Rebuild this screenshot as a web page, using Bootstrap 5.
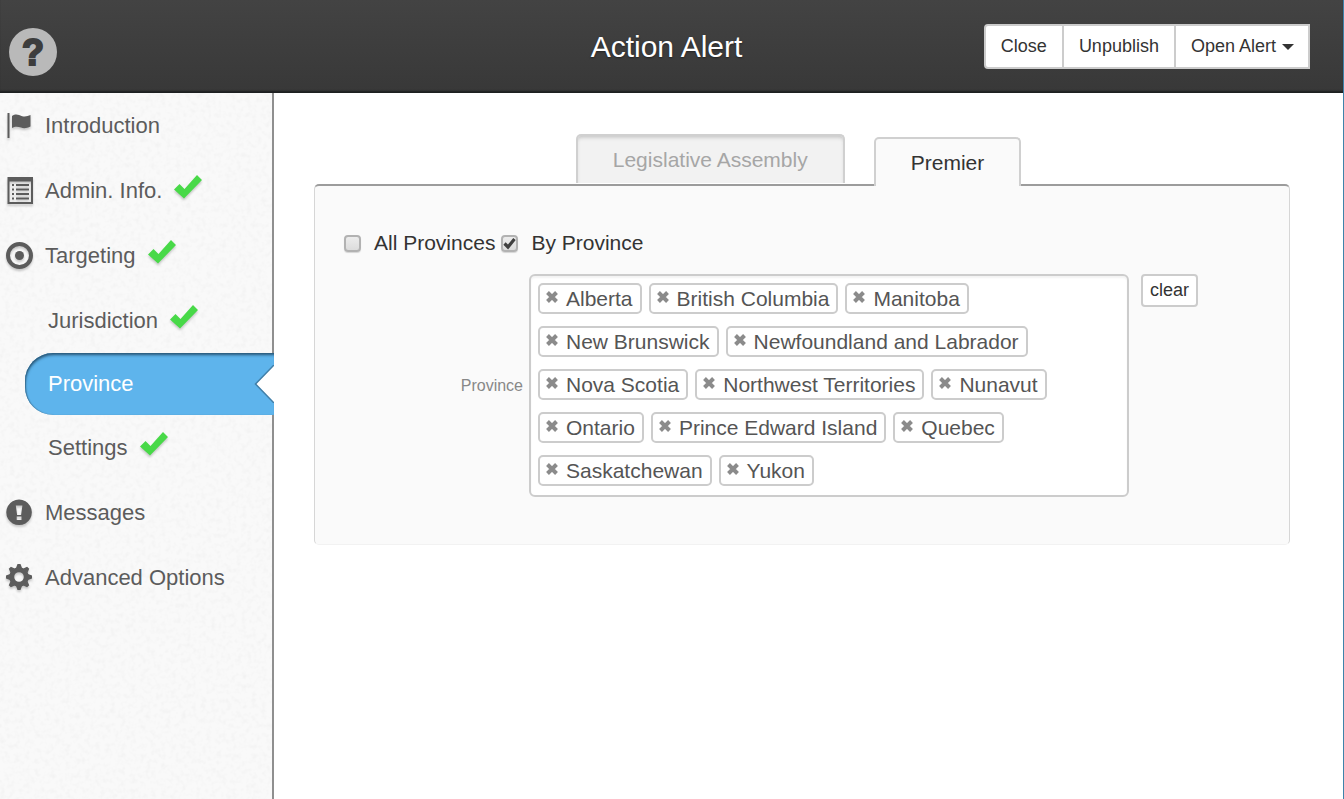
<!DOCTYPE html>
<html lang="en">
<head>
<meta charset="utf-8">
<meta name="viewport" content="width=device-width, initial-scale=1">
<title>Action Alert</title>
<link href="https://cdn.jsdelivr.net/npm/bootstrap@5.3.0/dist/css/bootstrap.min.css" rel="stylesheet">
<style>
  body { font-family: "Liberation Sans", Arial, sans-serif; color: #333; border-right: 1px solid #3f83aa; }

  /* Top bar */
  .topbar { height: 93px; padding: 0 19px 0 9px; background: linear-gradient(#434343, #383838); box-shadow: inset 0 -3px 2px -1px #1c1f20; }
  .topbar-title { font-size: 30px; line-height: 36px; color: #fff; text-shadow: 0 1px 2px #222; }
  .help-link { width: 48px; height: 48px; margin-top: 11px; background: #b9b9b9; color: #3d3d3d; font-size: 36px; font-weight: 700; line-height: 49px; -webkit-text-stroke: 2px #3d3d3d; }
  .topbar-actions { margin-right: 14px; }
  .topbar-actions .btn { border: 2px solid #ccc; border-radius: 0; background: #fff; color: #333; font-size: 18px; line-height: 25px; padding: 8px 15px; }
  .topbar-actions .btn:first-child { border-radius: 4px 0 0 4px; }
  .topbar-actions .btn + .btn { margin-left: -2px; }
  .topbar-actions .dropdown-toggle { padding-right: 14px; }
  .topbar-actions .dropdown-toggle::after { border-width: 6px 6px 0; margin-left: 6px; vertical-align: 2px; }

  /* Side navigation */
  .sidebar { width: 274px; border-right: 2px solid #8f8f8f; background: #f9f9f9; }
  .paper { z-index: 0; }
  .sidebar .nav { z-index: 1; }
  .sidebar .nav-link { height: 65px; padding: 0 0 0 6px; color: #5c5c5c; font-size: 22px; line-height: 28px; }
  .sidebar .nav-icon { width: 27px; height: 27px; margin-right: 12px; fill: #5c5c5c; filter: drop-shadow(0 2px 1px rgba(0,0,0,.2)); }
  .sidebar .done-icon { width: 28px; height: 24px; margin: 0 0 8px 12px; fill: #48d948; filter: drop-shadow(0 2px 1px rgba(0,0,0,.2)); }
  .sidebar .sub-link { padding-left: 48px; }
  .sidebar .sub-link.active { height: 62px; margin: 0 -2px 0 25px; padding-left: 23px; border-radius: 28px 0 0 28px; background: #5eb4ec; color: #fff; box-shadow: inset 1px 3px 3px -1px #285676, inset 1px 0 1px #4683ab; }
  .sidebar .notch { width: 20px; height: 38px; }

  /* Target panel */
  .workspace { padding: 41px 53px 40px 40px; }
  .target-tabs { gap: 29px; padding-right: 7px; }
  .target-tabs .nav-link { padding: 8px 35px; border: 2px solid #d0d0d0; border-bottom: 0; border-radius: 5px 5px 0 0; font-size: 21px; line-height: 31px; }
  .target-tabs .nav-link.idle { margin: 0 0 1px; background: #f2f2f2; color: #a6a6a6; box-shadow: inset 0 3px 4px -2px #bbb; }
  .target-tabs .nav-link.active { margin: 0 0 -2px; background: #fafafa; color: #333; }
  .target-panel { padding: 42px 29px 47px; border: 1px solid #d6d6d6; border-top: 2px solid #9c9c9c; border-bottom-color: #f2f2f2; border-radius: 5px; background: #fafafa; }
  .choice { gap: 13px; font-size: 21px; line-height: 30px; }
  .choice-row { gap: 6px; margin-bottom: 16px; }
  .tick { appearance: none; width: 17px; height: 17px; margin: 0; border: 2px solid #b2b2b2; border-radius: 4px; background: linear-gradient(#ececec, #dcdcdc); box-shadow: 0 1px 1px rgba(0,0,0,.15); }
  .tick:checked { background: url("data:image/svg+xml,%3Csvg xmlns='http://www.w3.org/2000/svg' viewBox='0 0 13 13'%3E%3Cpath d='M1.500 6.500l3.500 3.500L11.500 2' fill='none' stroke='%23404040' stroke-width='3.200'/%3E%3C/svg%3E") center, linear-gradient(#ececec, #dcdcdc); }
  .field-label { width: 179px; margin-right: 6px; color: #888; font-size: 16px; line-height: 22px; text-align: right; }
  .tag-box { flex: 0 1 600px; min-width: 0; gap: 12px 7px; margin: 0 12px 0 0; padding: 7px 7px 9px; border: 2px solid #ccc; border-radius: 6px; background: #fff; box-shadow: inset 0 2px 2px rgba(0,0,0,.05); }
  .tag-item { height: 31px; padding: 0 7px 0 6px; border: 2px solid #ccc; border-radius: 5px; color: #555; font-size: 21px; line-height: 27px; }
  .tag-remove { width: 12px; height: 12px; margin: 0 8px 4px 0; padding: 0; border: 0; background: none; }
  .tag-remove svg { display: block; stroke: #8b8b8b; stroke-width: 4; }
  .clear-btn { padding: 2px 7px 3px; border: 2px solid #ccc; border-radius: 4px; background: #fff; color: #333; font-size: 18px; line-height: 24px; }
</style>
</head>
<body class="min-vh-100 d-flex flex-column">

<svg class="d-none" aria-hidden="true">
  <symbol id="done" viewBox="0 0 28 24"><path d="M0 14.500l5.500-5.500 5 5L23 0l5 5L10 23.500z"/></symbol>
  <symbol id="cross" viewBox="0 0 12 12"><path d="M1.500 1.500l9 9M10.500 1.500l-9 9"/></symbol>
</svg>

<header class="topbar d-flex align-items-center">
  <div class="col"><a href="#" class="help-link d-block rounded-circle text-center text-decoration-none" aria-label="Help">?</a></div>
  <h1 class="topbar-title fw-normal m-0">Action Alert</h1>
  <div class="col d-flex justify-content-end">
    <div class="topbar-actions d-flex">
      <button type="button" class="btn">Close</button>
      <button type="button" class="btn">Unpublish</button>
      <button type="button" class="btn dropdown-toggle" data-bs-toggle="dropdown" aria-expanded="false">Open Alert</button>
    </div>
  </div>
</header>

<div class="d-flex flex-grow-1">
  <aside class="sidebar flex-shrink-0 position-relative">
    <svg class="paper position-absolute top-0 start-0 w-100 h-100" aria-hidden="true">
      <filter id="grain" x="0" y="0" width="100%" height="100%">
        <feTurbulence type="fractalNoise" baseFrequency="0.2" numOctaves="2" seed="4" stitchTiles="stitch"/>
        <feColorMatrix values="0 0 0 0 0.4  0 0 0 0 0.4  0 0 0 0 0.4  0.18 0 0 0 -0.08"/>
      </filter>
      <rect width="100%" height="100%" filter="url(#grain)"/>
    </svg>
    <nav class="nav flex-column flex-nowrap position-relative">
      <a href="#" class="nav-link d-flex align-items-center">
        <svg class="nav-icon" viewBox="0 0 27 27"><path d="M1.500 1h2v25h-2zM6 4c4-3 7-1 9.500 0 3 1 6 .500 9-1v11.500c-4 2-7 2-9.500 1-3-1-6-1.500-9 .500z"/></svg>
        Introduction</a>
      <a href="#" class="nav-link d-flex align-items-center">
        <svg class="nav-icon" viewBox="0 0 27 27"><path fill-rule="evenodd" d="M1.500 0H27v27H1.500zM3.500 4.500V25H25V4.500z"/><path d="M6 7h2v2H6zM10 7h13v2H10zM6 11.500h2v2H6zM10 11.500h13v2H10zM6 16h2v2H6zM10 16h13v2H10zM6 20.500h2v2H6zM10 20.500h13v2H10z"/></svg>
        Admin. Info.<svg class="done-icon"><use href="#done"/></svg></a>
      <a href="#" class="nav-link d-flex align-items-center">
        <svg class="nav-icon" viewBox="0 0 27 27"><circle cx="13.500" cy="13.500" r="11.500" fill="none" stroke="#5c5c5c" stroke-width="4"/><circle cx="13.500" cy="13.500" r="4.500"/></svg>
        Targeting<svg class="done-icon"><use href="#done"/></svg></a>
      <a href="#" class="nav-link sub-link d-flex align-items-center">Jurisdiction<svg class="done-icon"><use href="#done"/></svg></a>
      <a href="#" class="nav-link sub-link active d-flex align-items-center" aria-current="page">Province
        <svg class="notch ms-auto" viewBox="0 0 20 38"><path d="M20 0L2 19l18 19z" fill="#fff"/><path d="M20 0L1.500 19 20 38" fill="none" stroke="#427fa8" stroke-width="1.500"/></svg></a>
      <a href="#" class="nav-link sub-link d-flex align-items-center">Settings<svg class="done-icon"><use href="#done"/></svg></a>
      <a href="#" class="nav-link d-flex align-items-center">
        <svg class="nav-icon" viewBox="0 0 27 27"><path fill-rule="evenodd" d="M13 .500a12.800 12.800 0 1 0 .1 0zM9.800 6.500h6.600l-1.300 9.500h-4zM10.700 17.500h4.800v3.500h-4.800z"/></svg>
        Messages</a>
      <a href="#" class="nav-link d-flex align-items-center">
        <svg class="nav-icon" viewBox="0 0 27 27"><g transform="translate(13 13)"><circle r="7.300" fill="none" stroke="#5c5c5c" stroke-width="5"/><path id="tooth" d="M-3-9l1.500-4h3l1.500 4z"/><use href="#tooth" transform="rotate(45)"/><use href="#tooth" transform="rotate(90)"/><use href="#tooth" transform="rotate(135)"/><use href="#tooth" transform="rotate(180)"/><use href="#tooth" transform="rotate(225)"/><use href="#tooth" transform="rotate(270)"/><use href="#tooth" transform="rotate(315)"/></g></svg>
        Advanced Options</a>
    </nav>
  </aside>

  <main class="workspace flex-grow-1">
    <nav class="target-tabs nav justify-content-center align-items-end">
      <a href="#" class="nav-link idle pb-2">Legislative Assembly</a>
      <a href="#" class="nav-link active position-relative" aria-current="page">Premier</a>
    </nav>
    <section class="target-panel">
      <div class="choice-row d-flex flex-wrap">
        <label class="choice d-flex align-items-center" for="all"><input class="tick" type="checkbox" id="all">All Provinces</label>
        <label class="choice d-flex align-items-center" for="by"><input class="tick" type="checkbox" id="by" checked>By Province</label>
      </div>
      <div class="d-flex align-items-start">
        <div class="field-label flex-shrink-1 align-self-center" id="province-label">Province</div>
        <ul class="tag-box d-flex flex-wrap list-unstyled" aria-labelledby="province-label">
          <li class="tag-item d-flex align-items-center"><button type="button" class="tag-remove" aria-label="Remove"><svg width="12" height="12"><use href="#cross"/></svg></button>Alberta</li>
          <li class="tag-item d-flex align-items-center"><button type="button" class="tag-remove" aria-label="Remove"><svg width="12" height="12"><use href="#cross"/></svg></button>British Columbia</li>
          <li class="tag-item d-flex align-items-center"><button type="button" class="tag-remove" aria-label="Remove"><svg width="12" height="12"><use href="#cross"/></svg></button>Manitoba</li>
          <li class="tag-item d-flex align-items-center"><button type="button" class="tag-remove" aria-label="Remove"><svg width="12" height="12"><use href="#cross"/></svg></button>New Brunswick</li>
          <li class="tag-item d-flex align-items-center"><button type="button" class="tag-remove" aria-label="Remove"><svg width="12" height="12"><use href="#cross"/></svg></button>Newfoundland and Labrador</li>
          <li class="tag-item d-flex align-items-center"><button type="button" class="tag-remove" aria-label="Remove"><svg width="12" height="12"><use href="#cross"/></svg></button>Nova Scotia</li>
          <li class="tag-item d-flex align-items-center"><button type="button" class="tag-remove" aria-label="Remove"><svg width="12" height="12"><use href="#cross"/></svg></button>Northwest Territories</li>
          <li class="tag-item d-flex align-items-center"><button type="button" class="tag-remove" aria-label="Remove"><svg width="12" height="12"><use href="#cross"/></svg></button>Nunavut</li>
          <li class="tag-item d-flex align-items-center"><button type="button" class="tag-remove" aria-label="Remove"><svg width="12" height="12"><use href="#cross"/></svg></button>Ontario</li>
          <li class="tag-item d-flex align-items-center"><button type="button" class="tag-remove" aria-label="Remove"><svg width="12" height="12"><use href="#cross"/></svg></button>Prince Edward Island</li>
          <li class="tag-item d-flex align-items-center"><button type="button" class="tag-remove" aria-label="Remove"><svg width="12" height="12"><use href="#cross"/></svg></button>Quebec</li>
          <li class="tag-item d-flex align-items-center"><button type="button" class="tag-remove" aria-label="Remove"><svg width="12" height="12"><use href="#cross"/></svg></button>Saskatchewan</li>
          <li class="tag-item d-flex align-items-center"><button type="button" class="tag-remove" aria-label="Remove"><svg width="12" height="12"><use href="#cross"/></svg></button>Yukon</li>
        </ul>
        <button type="button" class="btn clear-btn">clear</button>
      </div>
    </section>
  </main>
</div>

<script src="https://cdn.jsdelivr.net/npm/bootstrap@5.3.0/dist/js/bootstrap.bundle.min.js"></script>
</body>
</html>
